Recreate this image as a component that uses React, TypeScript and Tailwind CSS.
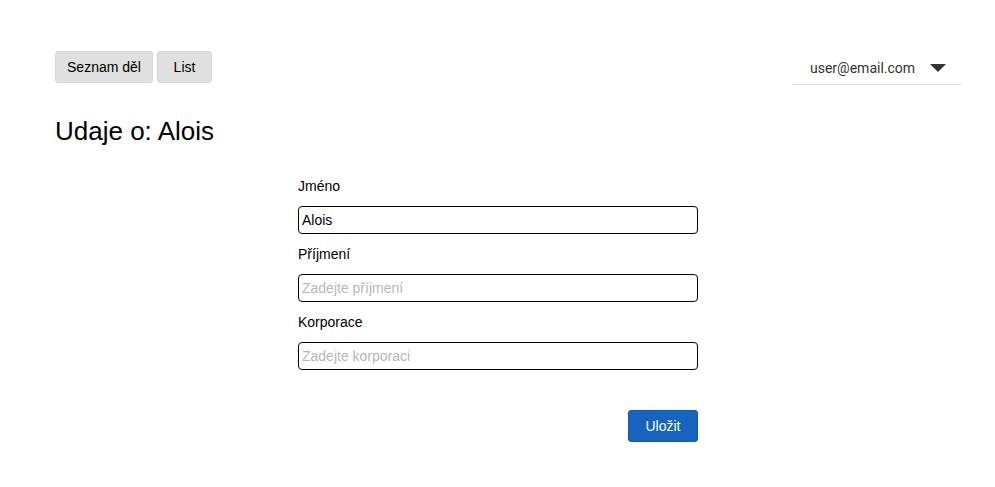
import React from 'react';

function Field({ label, value, placeholder }: { label: string; value?: string; placeholder?: string }) {
  return (
    <div className="mb-[10px]">
      <label className="block h-5 leading-5 mb-[10px] text-sm text-black">{label}</label>
      <input
        className="block w-full h-[28px] px-[3px] border border-black rounded-[4px] text-sm text-black placeholder:text-[#b8b8b8] outline-none"
        defaultValue={value}
        placeholder={placeholder}
      />
    </div>
  );
}

export default function App() {
  return (
    <div className="min-h-screen bg-white font-['Liberation_Sans',Arial,sans-serif]">
      <header className="flex justify-between items-start pt-[51px] pl-[55px] pr-[33px]">
        <div className="flex gap-1">
          <button className="h-8 w-[98px] bg-[#e0e0e0] border border-[#d6d6d6] rounded-[3px] text-sm text-black">
            Seznam děl
          </button>
          <button className="h-8 w-[55px] bg-[#e0e0e0] border border-[#d6d6d6] rounded-[3px] text-sm text-black">
            List
          </button>
        </div>
        <div className="w-[170px] h-[34px] border-b border-[#e0e0e0] flex items-center pl-[18px] pr-4 font-['Roboto',sans-serif] text-sm text-[#333]">
          <span className="flex-1">user@email.com</span>
          <svg width="16" height="8" viewBox="0 0 16 8" className="mt-[1px]">
            <path d="M0 0 H16 L8 8 Z" fill="#333" />
          </svg>
        </div>
      </header>

      <h1 className="pl-[55px] mt-[32px] text-[26px] leading-7 text-black">Udaje o: Alois</h1>

      <form className="w-[400px] ml-[298px] mt-[31px]">
        <Field label="Jméno" value="Alois" />
        <Field label="Příjmení" placeholder="Zadejte příjmení" />
        <Field label="Korporace" placeholder="Zadejte korporaci" />
        <div className="flex justify-end mt-[40px]">
          <button type="button" className="h-8 w-[70px] bg-[#1565c0] border border-[#1259a8] rounded-[3px] text-sm text-white">
            Uložit
          </button>
        </div>
      </form>
    </div>
  );
}
